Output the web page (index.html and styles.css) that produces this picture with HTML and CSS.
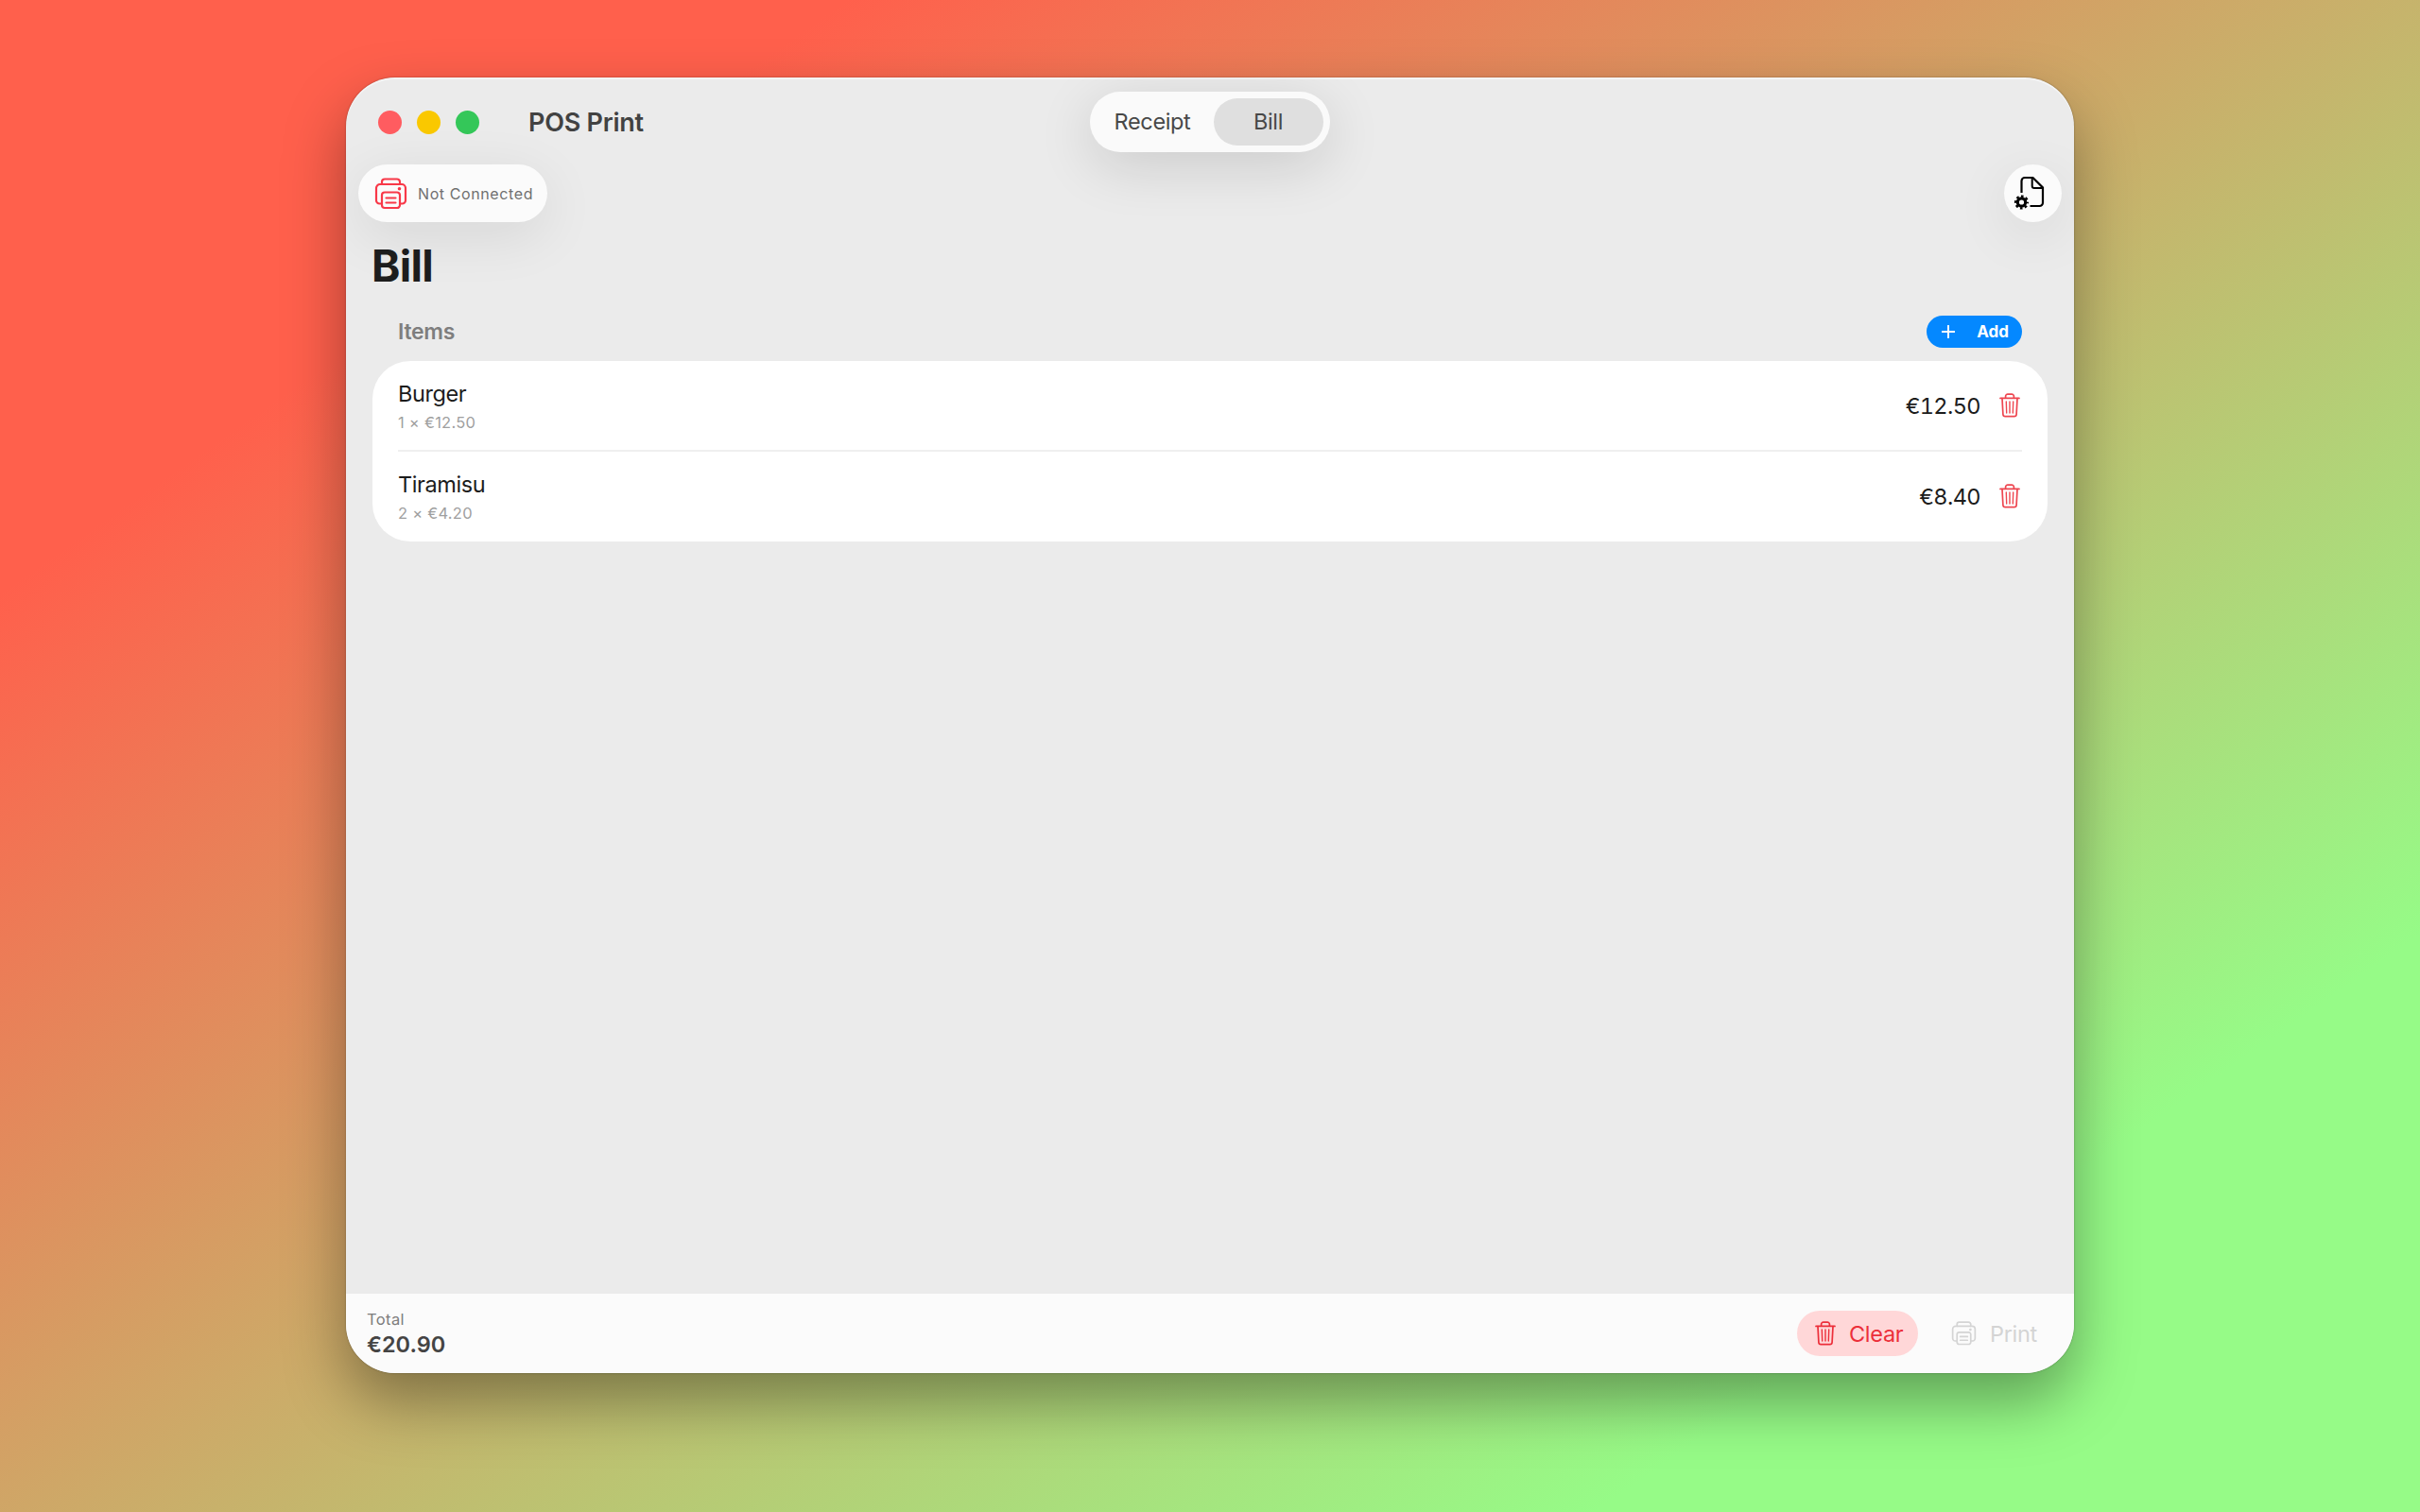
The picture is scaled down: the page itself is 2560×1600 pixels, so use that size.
FILE: index.html
```html
<!DOCTYPE html>
<html lang="en">
<head>
    <meta charset="UTF-8">
    <meta name="viewport" content="width=device-width, initial-scale=1.0">
    <title>POS Print</title>
    <link rel="stylesheet" href="styles.css">
</head>
<body>
    <!-- Shared icons -->
    <svg class="icon-defs" width="0" height="0">
        <symbol id="icon-printer" viewBox="0 0 34 34">
            <g fill="none" stroke="currentColor" stroke-width="2.2" stroke-linejoin="round" stroke-linecap="round">
                <path d="M7.5 7V4.5a3 3 0 0 1 3-3h13a3 3 0 0 1 3 3V7"/>
                <path d="M7.5 27.5H5a3.5 3.5 0 0 1-3.5-3.5V11A4 4 0 0 1 5.5 7h23a4 4 0 0 1 4 4v13a3.5 3.5 0 0 1-3.5 3.5h-2.5"/>
                <path d="M7.5 18.5a3 3 0 0 1 3-3h13a3 3 0 0 1 3 3V29a3 3 0 0 1-3 3h-13a3 3 0 0 1-3-3z"/>
                <path d="M12 21.5h10M12 26.5h10"/>
            </g>
            <circle cx="26" cy="11.8" r="1.8" fill="currentColor"/>
        </symbol>
        <symbol id="icon-trash" viewBox="0 0 22 26">
            <g fill="none" stroke="currentColor" stroke-width="1.7" stroke-linejoin="round" stroke-linecap="round">
                <path d="M1 5.4h20"/>
                <path d="M6.6 5.2V3.4A2.3 2.3 0 0 1 8.9 1.1h4.2a2.3 2.3 0 0 1 2.3 2.3v1.8"/>
                <path d="M3 5.6l.9 16.9a2.3 2.3 0 0 0 2.3 2.2h9.6a2.3 2.3 0 0 0 2.3-2.2L19 5.6"/>
                <path d="M7.3 9l.4 12M11 9v12M14.7 9l-.4 12" stroke-width="1.4"/>
            </g>
        </symbol>
    </svg>

    <div class="window">
        <header class="titlebar">
            <div class="titlebar-left">
                <div class="traffic-lights">
                    <span class="light close"></span>
                    <span class="light minimize"></span>
                    <span class="light zoom"></span>
                </div>
                <h1 class="app-title">POS Print</h1>
            </div>
            <nav class="tabs">
                <button class="tab">Receipt</button>
                <button class="tab active">Bill</button>
            </nav>
        </header>

        <div class="toolbar">
            <div class="status">
                <svg class="status-icon"><use href="#icon-printer"/></svg>
                <span>Not Connected</span>
            </div>
            <button class="doc-settings" aria-label="Document settings">
                <svg width="33" height="36" viewBox="0 0 33 36">
                    <path d="M8.5 18V5.5A3.5 3.5 0 0 1 12 2h8.5L31 12.5V28.5a3.5 3.5 0 0 1-3.5 3.5H17.5" fill="none" stroke="#000" stroke-width="2.2"/>
                    <path d="M19.7 2v8.8a2.2 2.2 0 0 0 2.2 2.2H31" fill="none" stroke="#000" stroke-width="2"/>
                    <circle cx="8.5" cy="28" r="4.2" fill="none" stroke="#000" stroke-width="3.2"/>
                    <circle cx="8.5" cy="28" r="6.4" fill="none" stroke="#000" stroke-width="2.4" stroke-dasharray="2.6 2.427" stroke-dashoffset="1.3"/>
                </svg>
            </button>
        </div>

        <main>
            <h2 class="page-title">Bill</h2>

            <div class="section-header">
                <h3>Items</h3>
                <button class="add-button">
                    <svg width="14" height="14" viewBox="0 0 14 14"><path d="M7 .7v12.6M.7 7h12.6" stroke="#fff" stroke-width="1.9" stroke-linecap="round"/></svg>
                    <span>Add</span>
                </button>
            </div>

            <div class="items">
                <div class="item">
                    <div class="item-info">
                        <div class="item-name">Burger</div>
                        <div class="item-detail">1 × €12.50</div>
                    </div>
                    <div class="item-price">€12.50</div>
                    <svg class="trash"><use href="#icon-trash"/></svg>
                </div>
                <div class="item">
                    <div class="item-info">
                        <div class="item-name">Tiramisu</div>
                        <div class="item-detail">2 × €4.20</div>
                    </div>
                    <div class="item-price">€8.40</div>
                    <svg class="trash"><use href="#icon-trash"/></svg>
                </div>
            </div>
        </main>

        <footer>
            <div class="total">
                <div class="total-label">Total</div>
                <div class="total-amount">€20.90</div>
            </div>
            <div class="actions">
                <button class="clear-button">
                    <svg class="trash"><use href="#icon-trash"/></svg>
                    <span>Clear</span>
                </button>
                <button class="print-button" disabled>
                    <svg class="print-icon"><use href="#icon-printer"/></svg>
                    <span>Print</span>
                </button>
            </div>
        </footer>
    </div>
</body>
</html>
```

FILE: styles.css
```css
* {
    box-sizing: border-box;
}

body {
    margin: 0;
    height: 1600px;
    padding: 82px 0 0 366px;
    overflow: hidden;
    font-family: Inter, "Liberation Sans", sans-serif;
    background: linear-gradient(145deg, #ff604c 18.5%, #96fb87 82%);
}

h1, h2, h3 {
    margin: 0;
}

button {
    border: none;
    padding: 0;
    font-family: inherit;
    display: flex;
    align-items: center;
    cursor: pointer;
}

svg {
    display: block;
    flex: none;
}

.icon-defs {
    position: absolute;
}

.window {
    width: 1828px;
    height: 1371px;
    display: flex;
    flex-direction: column;
    overflow: hidden;
    border-radius: 52px;
    background-color: #ebebeb;
    box-shadow: 0 0 2px rgba(0, 0, 0, 0.35), 0 30px 64px rgba(0, 0, 0, 0.36);
}

/* Title bar */
.titlebar {
    height: 92px;
    flex: none;
    display: grid;
    grid-template-columns: 1fr auto 1fr;
    align-items: center;
    border-radius: 52px 52px 0 0;
    box-shadow: inset 0 2px 0 rgba(255, 255, 255, 0.5);
}

.titlebar-left {
    display: flex;
    align-items: center;
    padding-left: 34px;
    gap: 52px;
    height: 94px;
}

.traffic-lights {
    display: flex;
    gap: 16px;
}

.light {
    width: 25px;
    height: 25px;
    border-radius: 50%;
}

.close {
    background-color: #ff5c60;
}

.minimize {
    background-color: #fac800;
}

.zoom {
    background-color: #34c759;
}

.app-title {
    font-size: 27px;
    font-weight: 600;
    letter-spacing: -0.25px;
    color: #424242;
}

.tabs {
    display: flex;
    width: 254px;
    height: 64px;
    margin-bottom: 1px;
    padding: 7px;
    border-radius: 32px;
    background-color: #fafafa;
    box-shadow: 0 14px 60px rgba(0, 0, 0, 0.14);
}

.tab {
    flex: 1;
    justify-content: center;
    padding-right: 6px;
    border-radius: 25px;
    font-size: 23.5px;
    font-weight: 400;
    letter-spacing: -0.35px;
    color: #484848;
    background: none;
}

.tab.active {
    flex: none;
    width: 116px;
    padding-right: 1px;
    background-color: #dfdfdf;
}

/* Toolbar */
.toolbar {
    display: flex;
    justify-content: space-between;
    padding: 0 13px;
    flex: none;
}

.status,
.doc-settings {
    height: 61px;
    border-radius: 31px;
    background-color: #fbfbfb;
    box-shadow: 0 14px 60px rgba(0, 0, 0, 0.09);
}

.status {
    width: 200px;
    display: flex;
    align-items: center;
    gap: 11px;
    padding-left: 17px;
    font-size: 16px;
    letter-spacing: 0.6px;
    color: #707070;
    white-space: nowrap;
}

.status-icon {
    width: 35px;
    height: 34px;
    color: #f83848;
}

.doc-settings {
    width: 61px;
    padding: 0 0 2px 10px;
}

/* Items */
main {
    flex: 1;
    padding: 0 28px;
}

.page-title {
    margin-top: 18px;
    line-height: 56px;
    font-size: 46px;
    font-weight: 700;
    letter-spacing: -0.7px;
    text-indent: -1px;
    color: #1d1d1d;
}

.section-header {
    display: flex;
    align-items: center;
    justify-content: space-between;
    height: 34px;
    margin-top: 25px;
    padding: 0 27px;
}

.section-header h3 {
    font-size: 23px;
    font-weight: 600;
    letter-spacing: -0.3px;
    color: #7e7e7e;
}

.add-button {
    width: 101px;
    height: 34px;
    padding: 0 14px 0 16px;
    justify-content: space-between;
    border-radius: 17px;
    background-color: #0488ff;
    color: #fff;
    font-size: 17px;
    font-weight: 700;
}

.items {
    margin-top: 14px;
    padding: 0 27px;
    border-radius: 40px;
    background-color: #fff;
}

.item {
    height: 94px;
    display: flex;
    align-items: center;
}

.item + .item {
    height: 97px;
    padding-bottom: 1px;
    border-top: 2px solid #efefef;
}

.item-info {
    flex: 1;
    padding-top: 6px;
}

.item-name {
    font-size: 23.5px;
    line-height: 30px;
    letter-spacing: -0.4px;
    color: #1c1c1c;
}

.item-detail {
    font-size: 16.5px;
    line-height: 31px;
    letter-spacing: 0.25px;
    color: #9f9f9f;
}

.item-price {
    font-size: 23.5px;
    font-variant-numeric: tabular-nums;
    letter-spacing: -0.6px;
    color: #1c1c1c;
}

.trash {
    width: 22px;
    height: 26px;
    color: #ee4650;
}

.item .trash {
    margin: 0 2px 0 20px;
}

/* Footer */
footer {
    height: 84px;
    flex: none;
    display: flex;
    align-items: center;
    justify-content: space-between;
    padding: 0 16px 0 22px;
    background-color: #fbfbfb;
}

.total {
    padding-top: 1px;
}

.total-label {
    font-size: 16.5px;
    line-height: 22px;
    letter-spacing: 0.4px;
    color: #7d7d7d;
}

.total-amount {
    font-size: 23.5px;
    line-height: 31px;
    font-weight: 600;
    color: #444;
}

.actions {
    display: flex;
    gap: 12px;
}

.clear-button,
.print-button {
    height: 48px;
    border-radius: 24px;
    font-size: 23.5px;
    letter-spacing: -0.3px;
}

.clear-button {
    width: 128px;
    gap: 14px;
    padding-left: 19px;
    background-color: #ffd7d8;
    color: #ec2f3a;
}

.clear-button .trash {
    color: #ec2f3a;
}

.print-button {
    width: 137px;
    gap: 14px;
    padding-left: 23px;
    background: none;
    color: #d4d4d4;
}

.print-icon {
    width: 27px;
    height: 26px;
}
```
